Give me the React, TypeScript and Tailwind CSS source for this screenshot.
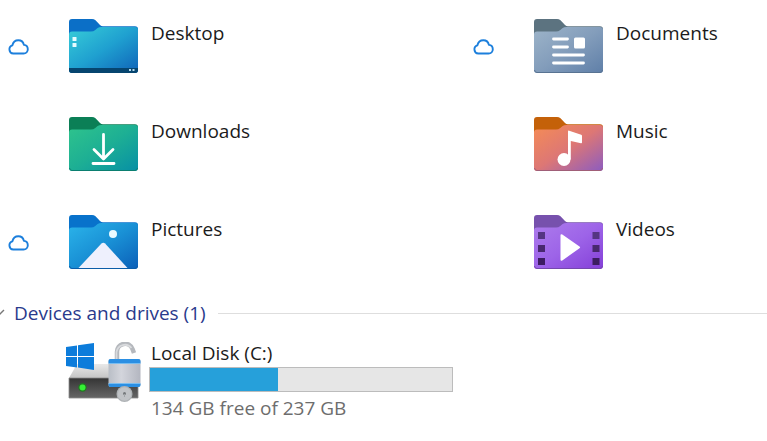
import { useState, type ReactNode } from "react"

type Folder = {
  name: string
  synced?: boolean
  tab: string
  edge: string
  stops: [string, string, string]
  art: ReactNode
}

const folders: Folder[] = [
  {
    name: "Desktop",
    synced: true,
    tab: "#0b6fc7",
    edge: "#0a5a9c",
    stops: ["#37cdd8", "#1fa0d0", "#0f62b8"],
    art: (
      <>
        <path d="M0 49h69v2a3 3 0 0 1-3 3H3a3 3 0 0 1-3-3Z" fill="#06456f" />
        <rect x="3.500" y="18" width="4" height="4" rx=".6" fill="#e6fbff" />
        <rect x="3.500" y="24" width="4" height="4" rx=".6" fill="#e6fbff" />
        <path d="M60 51h2M63.500 51h2" stroke="#b6dbef" strokeWidth="1.800" />
      </>
    ),
  },
  {
    name: "Documents",
    synced: true,
    tab: "#5c7380",
    edge: "#587392",
    stops: ["#9db4c9", "#839dbb", "#5f7fa8"],
    art: (
      <>
        <path
          d="M19.500 20h14M19.500 28h14M19.500 36h30M19.500 44h30"
          stroke="#fff"
          strokeWidth="2.800"
          strokeLinecap="round"
        />
        <rect x="40" y="18.500" width="11" height="11" rx="1.500" fill="#fff" />
      </>
    ),
  },
  {
    name: "Downloads",
    tab: "#0b7f56",
    edge: "#0b7f70",
    stops: ["#2fc48c", "#1daf94", "#078fa5"],
    art: (
      <path
        d="M34.500 17.500v24M25 32.500l9.500 9.500 9.500-9.500M24 46.500h21"
        fill="none"
        stroke="#fff"
        strokeWidth="2.800"
        strokeLinecap="round"
        strokeLinejoin="round"
      />
    ),
  },
  {
    name: "Music",
    tab: "#c46109",
    edge: "#a05e78",
    stops: ["#f58c55", "#dd7775", "#8c5cc0"],
    art: (
      <>
        <circle cx="30" cy="42.500" r="6.500" fill="#fff" />
        <path d="M34 42.500V14.500q0-1.200 1.200-.8l12 4q.8.300.8 1.100v6.700q0 1-1 .8L36.800 24v18.500Z" fill="#fff" />
      </>
    ),
  },
  {
    name: "Pictures",
    synced: true,
    tab: "#0872cb",
    edge: "#0a5ca8",
    stops: ["#2bb4ea", "#1990d5", "#0b5fb8"],
    art: (
      <>
        <circle cx="44" cy="19" r="4" fill="#eafaff" />
        <path d="M9.500 53 32.500 28.500q1.800-1.700 3.600 0L58.500 53Z" fill="#eef0fd" />
      </>
    ),
  },
  {
    name: "Videos",
    tab: "#7751ad",
    edge: "#7548ae",
    stops: ["#ad7cec", "#9d64e8", "#843fd8"],
    art: (
      <>
        <path d="M4 17h7v7H4ZM58.500 17h7v7h-7Z" fill="#553582" />
        <path d="M4 30h7v7H4ZM58.500 30h7v7h-7Z" fill="#48286f" />
        <path d="M4 43h7v7H4ZM58.500 43h7v7h-7Z" fill="#3c1c61" />
        <path d="M26.500 20.500q0-2 1.800-.9L45.500 31.400q1.300.9 0 1.800L28.300 45.500q-1.800 1-1.800-1Z" fill="#fff" />
      </>
    ),
  },
]

const drive = { name: "Local Disk (C:)", free: 134, total: 237, usedPercent: 42.5 }

function CloudIcon() {
  return (
    <svg className="h-4 w-[22px]" viewBox="0 0 22 16" fill="none" role="img" aria-label="Available online">
      <path
        d="M5.300 14.500a4.200 4.200 0 0 1-.9-8.200C5.100 3.200 7.500 1.200 10.300 1.200c2.700 0 5 1.800 5.600 4.700 2.300.3 3.900 2 3.900 4.300 0 2.500-1.900 4.300-4.200 4.300Z"
        stroke="#1c7fdc"
        strokeWidth="1.900"
        strokeLinejoin="round"
      />
    </svg>
  )
}

function FolderIcon({ folder }: { folder: Folder }) {
  const id = `body-${folder.name}`

  return (
    <svg className="h-[55px] w-[70px] shrink-0" viewBox="0 0 70 55" aria-hidden="true">
      <defs>
        <linearGradient id={id} x1="0" y1="0" x2="1" y2="1">
          <stop offset="0" stopColor={folder.stops[0]} />
          <stop offset=".5" stopColor={folder.stops[1]} />
          <stop offset="1" stopColor={folder.stops[2]} />
        </linearGradient>
      </defs>
      <path
        d="M0 3a3 3 0 0 1 3-3h20q2 0 3.500 1.300L31 6q1.300 1.200 3 1.200h32a3 3 0 0 1 3 3V20H0Z"
        fill={folder.tab}
      />
      <path
        d="M0 15.500a3 3 0 0 1 3-3h19q2.500 0 4.300-1.500l2-1.700Q30 8 32.500 8H66a3 3 0 0 1 3 3v40a3 3 0 0 1-3 3H3a3 3 0 0 1-3-3Z"
        fill={`url(#${id})`}
      />
      <path d="M.5 51q.3 2.500 2.500 2.500h63q2.200 0 2.500-2.500" fill="none" stroke={folder.edge} />
      {folder.art}
    </svg>
  )
}

function DriveIcon() {
  return (
    <svg className="mt-[3px] h-[62px] w-[75px] shrink-0" viewBox="0 0 75 62" aria-hidden="true">
      <defs>
        <linearGradient id="drive-top" x1="0" y1="0" x2="0" y2="1">
          <stop offset="0" stopColor="#e9e9e9" />
          <stop offset="1" stopColor="#c4c4c4" />
        </linearGradient>
        <linearGradient id="drive-front" x1="0" y1="0" x2="0" y2="1">
          <stop offset="0" stopColor="#343434" />
          <stop offset="1" stopColor="#666" />
        </linearGradient>
        <linearGradient id="lock-body" x1="0" y1="0" x2="1" y2="0">
          <stop offset="0" stopColor="#b9bec6" />
          <stop offset=".4" stopColor="#d3d5dc" />
          <stop offset="1" stopColor="#b3b6c0" />
        </linearGradient>
      </defs>
      <path d="M11 22h54l7 14H3Z" fill="url(#drive-top)" />
      <path d="M3 36h69v20H3Z" fill="url(#drive-front)" stroke="#8a8a8a" strokeWidth=".8" />
      <circle cx="16.500" cy="45.500" r="4.200" fill="#1f7a1f" />
      <circle cx="16.500" cy="45.500" r="3" fill="#35f035" />
      <path d="M0 5 11 3.400V14H0ZM12 3.300 28 1v13H12ZM0 15h11v10.500L0 24ZM12 15h16v13l-16-2.400Z" fill="#0c7cdb" />
      <path d="M51 18v-8a8 8 0 0 1 15.500-3l1.500 4" fill="none" stroke="#b5b8bd" strokeWidth="4.500" />
      <path d="M50.500 17v-7a8.500 8.500 0 0 1 15-4" fill="none" stroke="#d8dadd" strokeWidth="1.800" />
      <rect x="42.500" y="17" width="32" height="28" rx="2" fill="url(#lock-body)" />
      <path d="M42.500 21V19a2 2 0 0 1 2-2h28a2 2 0 0 1 2 2v2ZM42.500 42h32V43a2 2 0 0 1-2 2h-28a2 2 0 0 1-2-2Z" fill="#2b8fe3" />
      <path d="M42.500 21.500h32M42.500 41.500h32" stroke="#79bdf0" />
      <circle cx="58.500" cy="52" r="8" fill="#aeb2b5" />
      <circle cx="58.500" cy="52" r="6.800" fill="#c0c3c6" />
      <circle cx="58.500" cy="51.500" r="1.500" fill="#74787b" />
      <path d="M58.500 52v3" stroke="#a0a4a7" />
    </svg>
  )
}

export default function App() {
  const [open, setOpen] = useState(true)

  return (
    <main className="min-h-screen overflow-x-hidden bg-white pt-[19px] pb-4 font-['Open_Sans','Noto_Sans',sans-serif] text-[19px] leading-7 text-[#1b1b1b]">
      {/* Folders */}
      <section aria-label="Folders" className="grid grid-cols-[465px_1fr] gap-y-[43px]">
        {folders.map((folder) => (
          <a key={folder.name} href={`#${folder.name}`} className="flex items-start pl-2">
            <span className="mr-[39px] w-[22px] shrink-0 pt-5">{folder.synced && <CloudIcon />}</span>
            <FolderIcon folder={folder} />
            <span className="ml-3">{folder.name}</span>
          </a>
        ))}
      </section>

      {/* Drives */}
      <section className="mt-[29px]">
        <h2 className="flex items-center">
          <button
            type="button"
            aria-expanded={open}
            onClick={() => setOpen(!open)}
            className="flex items-center gap-2 text-[#293a8c]"
          >
            <svg className="-ml-1.5 h-2 w-3" viewBox="0 0 12 8" fill="none" aria-hidden="true">
              <path d="m0 1 4.500 5.500L10 1" stroke="#777" strokeWidth="1.400" />
            </svg>
            <span>Devices and drives (1)</span>
          </button>
          <span className="ml-3 h-px flex-1 bg-[#dedede]" />
        </h2>

        {open && (
          <a href="#c" className="mt-3 flex items-start gap-2 pl-[66px]">
            <DriveIcon />
            <div className="w-[304px]">
              <div className="pl-0.5">{drive.name}</div>
              <div
                role="progressbar"
                aria-label="Used space"
                aria-valuenow={drive.usedPercent}
                className="h-[25px] border border-[#bcbcbc] bg-[#e6e6e6]"
              >
                <div className="h-full bg-[#26a0da]" style={{ width: `${drive.usedPercent}%` }} />
              </div>
              <div className="mt-0.5 pl-0.5 text-[#6d6d6d]">
                {drive.free} GB free of {drive.total} GB
              </div>
            </div>
          </a>
        )}
      </section>
    </main>
  )
}
